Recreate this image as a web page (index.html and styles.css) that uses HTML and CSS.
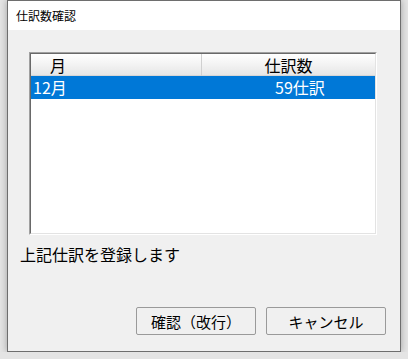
FILE: index.html
```html
<!DOCTYPE html>
<html lang="ja">
<head>
  <meta charset="UTF-8">
  <title>仕訳数確認</title>
  <link rel="stylesheet" href="styles.css">
</head>
<body>

  <div class="dialog">
    <!-- Title Bar -->
    <div class="title-bar">仕訳数確認</div>

    <div class="dialog-body">
      <!-- List View -->
      <div class="list-frame">
        <div class="list">
          <div class="list-head">
            <div class="col-month">月</div>
            <div class="col-count">仕訳数</div>
          </div>
          <div class="list-row selected">
            <div class="col-month">12月</div>
            <div class="col-count">59仕訳</div>
          </div>
        </div>
      </div>

      <p class="message">上記仕訳を登録します</p>

      <div class="buttons">
        <button class="btn">確認（改行）</button>
        <button class="btn">キャンセル</button>
      </div>
    </div>
  </div>

</body>
</html>
```

FILE: styles.css
```css
/* desktop behind the dialog */
body {
  margin: 0;
  padding: 0 7px;
  background: #e4e4e4;
  font-family: "Noto Sans CJK JP", "Noto Sans", sans-serif;
  color: #000;
}

.dialog {
  box-sizing: border-box;
  width: 394px;
  height: 352px;
  border: 1px solid #6e6e6e;
  background: #f0f0f0;
  box-shadow: 0 0 7px rgba(0, 0, 0, 0.3);
  display: flex;
  flex-direction: column;
}

.title-bar {
  height: 29px;
  line-height: 29px;
  padding-left: 8px;
  background: #fff;
  font-size: 12px;
}

.dialog-body {
  flex: 1;
  display: flex;
  flex-direction: column;
  padding: 22px 14px 16px 12px;
}

/* sunken 3d border like a windows list view */
.list-frame {
  margin: 0 9px;
  height: 183px;
  box-sizing: border-box;
  border: 1px solid;
  border-color: #a0a0a0 #fff #fff #a0a0a0;
}

.list {
  height: 100%;
  box-sizing: border-box;
  border: 1px solid;
  border-color: #696969 #e3e3e3 #e3e3e3 #696969;
  background: #fff;
}

.list-head,
.list-row {
  display: grid;
  grid-template-columns: 171px 1fr;
  font-size: 16px;
}

.list-head {
  height: 22px;
  line-height: 22px;
  background: linear-gradient(#ffffff, #f3f3f3 50%, #e6e6e6);
  border-bottom: 1px solid #d6d6d6;
  box-sizing: border-box;
}

.list-head .col-month {
  padding-left: 19px;
  border-right: 1px solid #d0d0d0;
}

.list-head .col-count {
  text-align: center;
}

.list-row {
  height: 23px;
  line-height: 23px;
}

.list-row .col-month {
  padding-left: 2px;
}

.list-row .col-count {
  padding-left: 73px;
}

/* selected row blue */
.list-row.selected {
  background: #0078d7;
  color: #fff;
}

.message {
  margin: 9px 0 0;
  font-size: 16px;
  line-height: 20px;
}

.buttons {
  margin-top: auto;
  display: flex;
  justify-content: flex-end;
  gap: 10px;
}

.btn {
  width: 120px;
  height: 28px;
  padding: 0;
  border: 1px solid #9a9a9a;
  border-radius: 2px;
  background: #f0f0f0;
  font-family: inherit;
  font-size: 15px;
  color: #000;
}
```
